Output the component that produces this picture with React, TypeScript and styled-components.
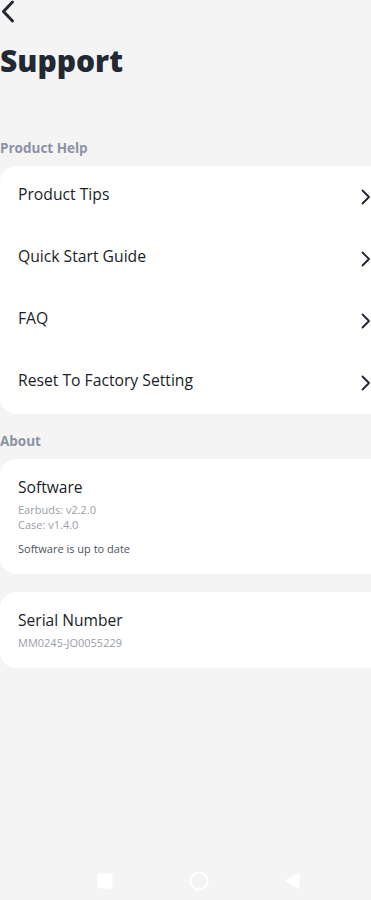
import styled, { createGlobalStyle } from 'styled-components'

const GlobalStyle = createGlobalStyle`
  html, body {
    margin: 0;
    padding: 0;
    background: #f4f4f4;
    overflow: hidden;
  }
  body {
    font-family: 'Open Sans', 'Noto Sans', sans-serif;
    color: #1f2430;
  }
`

const Screen = styled.div`
  display: flex;
  flex-direction: column;
  width: 371px;
  height: 900px;
  overflow: hidden;
  background: #f4f4f4;
`

const BackButton = styled.button`
  display: flex;
  align-items: center;
  width: 24px;
  height: 24px;
  margin: 0;
  padding: 0 0 0 1px;
  border: none;
  background: none;
`

const Title = styled.h1`
  margin: 17px 0 0;
  font-size: 30px;
  line-height: 40px;
  font-weight: 800;
  color: #222834;
`

const SectionLabel = styled.div<{ $top: number }>`
  margin-top: ${(p) => p.$top}px;
  font-size: 13.5px;
  line-height: 20px;
  font-weight: 700;
  color: #8a93a6;
`

const Card = styled.div<{ $top?: number }>`
  display: flex;
  flex-direction: column;
  width: 400px;
  margin-top: ${(p) => p.$top ?? 10}px;
  background: #ffffff;
  border-radius: 16px;
`

const Row = styled.div`
  box-sizing: border-box;
  display: flex;
  align-items: center;
  justify-content: space-between;
  height: 62px;
  padding: 0 21px 6px 18px;
  font-size: 15.7px;
  font-weight: 500;
  color: #1a1e27;
`

const Chevron = styled.span`
  display: flex;
  margin-top: 6px;
  margin-right: 8px;
`

const InfoBlock = styled.div<{ $pad: string }>`
  display: flex;
  flex-direction: column;
  padding: ${(p) => p.$pad};
`

const InfoTitle = styled.div`
  font-size: 15.6px;
  line-height: 24px;
  font-weight: 500;
  color: #1a1e27;
`

const InfoLine = styled.div<{ $dark?: boolean; $gap?: number }>`
  margin-top: ${(p) => p.$gap ?? 0}px;
  font-size: 11px;
  line-height: 15px;
  color: ${(p) => (p.$dark ? '#4c5260' : '#9a9ea6')};
`

const NavBar = styled.div`
  display: flex;
  align-items: center;
  margin-top: auto;
  height: 30px;
  padding-bottom: 4px;
`

const NavSlot = styled.div<{ $left: number }>`
  display: flex;
  margin-left: ${(p) => p.$left}px;
`

const ChevronIcon = () => (
  <svg width="10" height="16" viewBox="0 0 10 16">
    <path d="M1.5 1.5 L8 8 L1.5 14.5" fill="none" stroke="#1f2430" strokeWidth="1.8" strokeLinecap="round" strokeLinejoin="round" />
  </svg>
)

const tips = ['Product Tips', 'Quick Start Guide', 'FAQ', 'Reset To Factory Setting']

export default function App() {
  return (
    <Screen>
      <GlobalStyle />
      <BackButton aria-label="Back">
        <svg width="14" height="24" viewBox="0 0 14 24">
          <path d="M11.5 2 L2.5 11.5 L11.5 21" fill="none" stroke="#222834" strokeWidth="3" strokeLinecap="round" strokeLinejoin="round" />
        </svg>
      </BackButton>
      <Title>Support</Title>

      <SectionLabel $top={57}>Product Help</SectionLabel>
      <Card $top={8}>
        {tips.map((t) => (
          <Row key={t}>
            {t}
            <Chevron>
              <ChevronIcon />
            </Chevron>
          </Row>
        ))}
      </Card>

      <SectionLabel $top={17}>About</SectionLabel>
      <Card $top={8}>
        <InfoBlock $pad="16px 18px 18px">
          <InfoTitle>Software</InfoTitle>
          <InfoLine $gap={3}>Earbuds: v2.2.0</InfoLine>
          <InfoLine>Case: v1.4.0</InfoLine>
          <InfoLine $dark $gap={9}>Software is up to date</InfoLine>
        </InfoBlock>
      </Card>
      <Card $top={18}>
        <InfoBlock $pad="16px 18px 18px">
          <InfoTitle>Serial Number</InfoTitle>
          <InfoLine $gap={3}>MM0245-JO0055229</InfoLine>
        </InfoBlock>
      </Card>

      <NavBar>
        <NavSlot $left={97}>
          <svg width="16" height="16" viewBox="0 0 16 16">
            <rect x="0.5" y="0.5" width="15" height="15" rx="3" fill="#ffffff" />
          </svg>
        </NavSlot>
        <NavSlot $left={76}>
          <svg width="20" height="20" viewBox="0 0 20 20">
            <circle cx="10" cy="10" r="8.5" fill="none" stroke="#ffffff" strokeWidth="2.2" />
          </svg>
        </NavSlot>
        <NavSlot $left={74}>
          <svg width="18" height="18" viewBox="0 0 18 18">
            <path d="M16 1 L16 17 L2 9 Z" fill="#ffffff" stroke="#ffffff" strokeWidth="1" strokeLinejoin="round" />
          </svg>
        </NavSlot>
      </NavBar>
    </Screen>
  )
}
